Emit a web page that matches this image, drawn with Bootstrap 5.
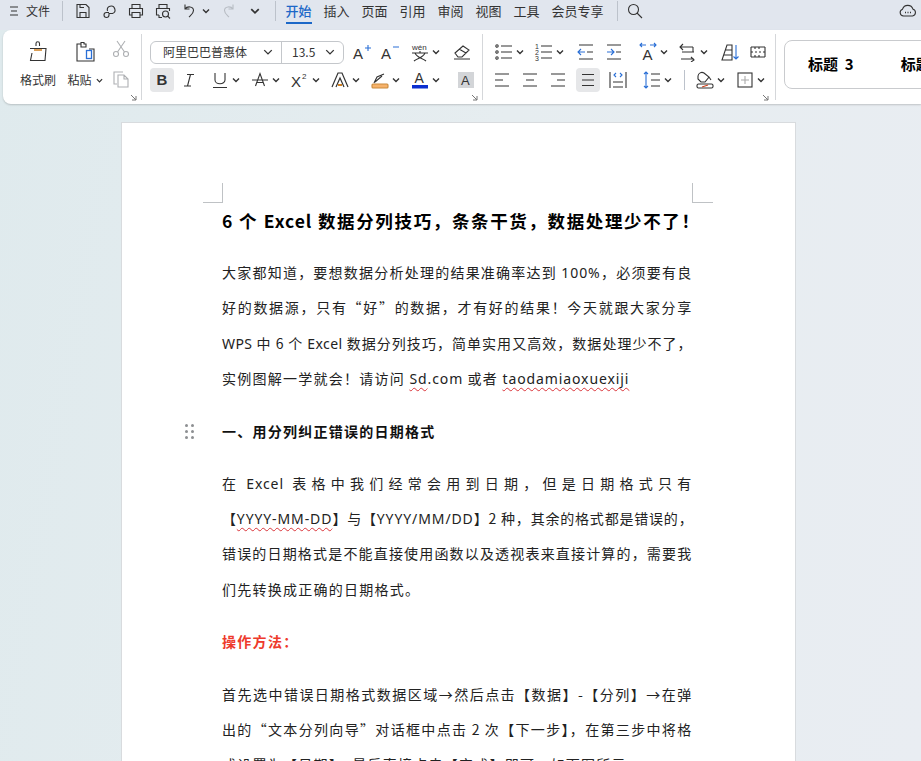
<!DOCTYPE html>
<html lang="zh-CN">
<head>
    <meta charset="UTF-8">
    <meta name="viewport" content="width=device-width, initial-scale=1.0">
    <link href="https://cdn.jsdelivr.net/npm/bootstrap@5.3.3/dist/css/bootstrap.min.css" rel="stylesheet">
    <script src="https://cdn.jsdelivr.net/npm/bootstrap@5.3.3/dist/js/bootstrap.bundle.min.js"></script>
    <title>文档</title>
    <style>
        html,body{height:761px;overflow:hidden;}
        body{
            font-family:"Noto Sans CJK SC","Noto Sans",sans-serif;
            background:linear-gradient(100deg,#dfeaed 0%,#e6edf0 50%,#e9edf2 100%);
            color:#333;
        }
        svg{display:block;flex:none;fill:none;stroke:#333;stroke-width:1.1;}
        svg text{stroke:none;fill:#333;font-family:"Liberation Sans",sans-serif;}
        .blue{stroke:#2a6fd6;}
        .gray{stroke:#aeb0b3;}
        .pale{stroke:#b7bcc3;}

        .topbar{height:30px;padding-bottom:9px;background:#e1e6ee;font-size:12px;}
        .topbar .tb-ic{width:26.5px;display:flex;justify-content:center;flex:none;}
        .sep{width:1px;height:20px;background:#bcc2cb;flex:none;}
        .file-label{width:25px;margin-left:6px;white-space:nowrap;}
        .sep-file{margin:0 7px 0 11px;}
        .undo{margin-left:3.5px;}
        .redo{margin-left:10px;}
        .more{margin-left:12px;}
        .sep-tabs{margin:0 10px 0 15px;}
        .sep-search{margin:0 8px 0 13px;}
        .tabs{align-self:flex-start;}
        .tab{width:26px;margin-right:12px;height:24px;line-height:21px;text-align:center;white-space:nowrap;font-size:13px;}
        .tab.wide{width:52px;margin-right:0;}
        .tab.on{color:#1c68c8;font-weight:500;}
        .tab.on::after{content:"";display:block;height:2px;background:#1c68c8;margin-top:1px;}

        .ribbon{height:74px;margin-left:3px;background:#fff;border-radius:8px 0 0 8px;box-shadow:0 1px 2px rgba(0,0,0,.18);overflow:hidden;}
        .grp{height:74px;flex:none;display:flex;flex-direction:column;}
        .grp-clip{width:138px;}
        .grp-font{width:340px;padding-left:8px;}
        .grp-para{width:292px;padding-left:5px;}
        .grp-line{width:1px;height:66px;background:#d5d7da;margin-top:4px;flex:none;}
        .rw{height:28px;display:flex;align-items:center;flex:none;}
        .rw.first{margin-top:8px;}
        .launch{height:8px;display:flex;justify-content:flex-end;flex:none;padding-right:4px;}
        .launch.clip{margin-bottom:2px;}
        .launch.para-l{padding-right:6px;}
        .c28{width:28px;display:flex;justify-content:center;flex:none;}
        .c40{width:40px;padding-left:6px;display:flex;align-items:center;flex:none;}
        .c40 .cr{margin-left:2px;}
        .c30{width:30px;display:flex;justify-content:center;flex:none;}
        .act{width:24px;height:24px;background:#e6e7e9;border-radius:4px;display:flex;align-items:center;justify-content:center;flex:none;}
        .glyph{font-family:"Liberation Sans",sans-serif;font-size:15px;line-height:20px;width:20px;text-align:center;color:#333;}
        .font-select{height:23px;width:194px;border:1px solid #c4c7cb;border-radius:6px;display:flex;font-size:12px;align-items:center;flex:none;}
        .font-name{width:131px;padding-left:12px;display:flex;align-items:center;justify-content:space-between;padding-right:8px;border-right:1px solid #c4c7cb;height:21px;}
        .font-size{flex:1;padding-left:10px;padding-right:8px;display:flex;align-items:center;justify-content:space-between;}
        .big-tool{font-size:12px;line-height:16px;text-align:center;flex:none;}
        .big-brush{width:60px;padding-left:10px;}
        .big-paste{width:44px;}
        .big-icon{margin-top:11px;height:24px;display:flex;justify-content:center;}
        .big-label{margin-top:7px;white-space:nowrap;display:flex;align-items:center;justify-content:center;}
        .small-stack{width:28px;padding-top:9px;padding-left:4px;}
        .small-stack svg+svg{margin-top:10px;}
        .style-box{width:300px;height:49px;margin-left:8px;margin-top:10px;border:1px solid #c9cbce;border-radius:8px;font-size:15px;font-weight:700;color:#000;flex:none;display:flex;align-items:center;}
        .style-box span{white-space:pre;}
        .style-box .first-style{margin-left:23px;}
        .style-box .next-style{margin-left:47px;}

        .doc{width:675px;margin:18px 0 0 121px;background:#fff;border:1px solid #d8dbde;border-bottom:0;height:700px;padding:60px 103px 0 100px;color:#222;}
        .corners{height:20px;margin-left:-19px;margin-right:-21px;display:flex;justify-content:space-between;}
        .corners i{display:block;width:20px;height:20px;border-bottom:1px solid #bfc2c5;}
        .corners .cl{border-right:1px solid #bfc2c5;}
        .corners .cr2{border-left:1px solid #bfc2c5;width:21px;}
        .doc-title{font-size:17.5px;font-weight:700;line-height:36px;color:#000;letter-spacing:1px;text-align-last:justify;margin:0 -8px 16px 0;white-space:nowrap;}
        .para{margin-bottom:17.2px;font-size:14px;line-height:35.3px;letter-spacing:1.25px;}
        .para div{white-space:nowrap;}
        .para .j{text-align-last:justify;letter-spacing:.8px;}
        .para .lat{font-family:"Noto Sans","Noto Sans CJK SC",sans-serif;letter-spacing:.9px;}
        .para .wps{letter-spacing:.4px;}
        .para .gap-l{margin-left:5px;}
        .sub{font-weight:700;color:#111;position:relative;top:.5px;}
        .red{font-weight:700;color:#ee3a2c;letter-spacing:1.3px;}
        .wavy{text-decoration:underline wavy #d9343a 1px;text-underline-offset:3px;}
        .drag{position:absolute;left:-37px;top:10px;width:9px;height:15px;}
        .drag svg{stroke:none;fill:#8d8f92;}
    </style>
</head>
<body>
    <svg width="0" height="0" class="position-absolute">
        <symbol id="caret" viewBox="0 0 8 8"><path d="M1 2.5 4 5.5 7 2.5" fill="none" stroke="#333" stroke-width="1.4"/></symbol>
        <symbol id="launch" viewBox="0 0 7 7"><path d="M1 1 6 6M6 2V6H2" fill="none" stroke="#777" stroke-width="1"/></symbol>
    </svg>

    <!-- top menu -->
    <div class="topbar d-flex align-items-center">
        <svg class="ms-2" width="12" height="12" viewBox="0 0 12 12"><path d="M2 2H10M3 6H9M2 10H10"/></svg>
        <span class="file-label">文件</span>
        <span class="sep sep-file"></span>
        <div class="tb-ic"><svg width="18" height="18" viewBox="0 0 18 18"><path d="M3 2.500H12L15 5.500V15.500H3ZM6 15.500V10.500H12V15.500M6 2.500V5.500H10"/></svg></div>
        <div class="tb-ic"><svg width="18" height="18" viewBox="0 0 18 18"><path d="M6.500 9A3.800 3.800 0 1 1 11.500 11.500H8V13A2.500 2.500 0 1 1 5.500 10.500H8"/></svg></div>
        <div class="tb-ic"><svg width="18" height="18" viewBox="0 0 18 18"><path d="M5 6V2.500H13V6M5 13H2.500V6.500H15.500V13H13M5 10.500H13V15.500H5Z"/></svg></div>
        <div class="tb-ic"><svg width="18" height="18" viewBox="0 0 18 18"><path d="M5 6V2.500H13V6M5 13H2.500V6.500H15.500V9M8 15.500H5V13"/><circle cx="11.500" cy="12" r="3"/><path d="M13.700 14.200 16 16.500"/></svg></div>
        <div class="d-flex align-items-center undo"><svg width="18" height="18" viewBox="0 0 18 18"><path d="M5 2.500V7H9.500M5 7C7 4 13.500 4 13.500 8.500 13.500 11.500 11 13 9 15"/></svg><svg class="ms-1" width="8" height="8"><use href="#caret"/></svg></div>
        <div class="redo"><svg class="pale" width="18" height="18" viewBox="0 0 18 18"><path d="M13 2.500V7H8.500M13 7C11 4 4.500 4 4.500 8.500 4.500 11.500 7 13 9 15"/></svg></div>
        <div class="more"><svg width="10" height="10"><use href="#caret"/></svg></div>
        <span class="sep sep-tabs"></span>
        <div class="d-flex tabs">
            <div class="tab on">开始</div><div class="tab">插入</div><div class="tab">页面</div><div class="tab">引用</div><div class="tab">审阅</div><div class="tab">视图</div><div class="tab">工具</div><div class="tab wide">会员专享</div>
        </div>
        <span class="sep sep-search"></span>
        <svg width="18" height="18" viewBox="0 0 18 18"><circle cx="7.500" cy="7.500" r="5"/><path d="M11 11 16 16"/></svg>
        <svg class="ms-auto me-1" width="18" height="16" viewBox="0 0 18 16"><path d="M4.500 13A3.500 3.500 0 0 1 3.500 6.200 5.500 5.500 0 0 1 14 6.200 3.500 3.500 0 0 1 13.500 13Z"/><path d="M6 9.500H7M8.500 9.500H9.500M11 9.500H12" stroke-width="1.400"/></svg>
    </div>

    <!-- ribbon -->
    <div class="ribbon d-flex">
        <div class="grp grp-clip">
            <div class="d-flex flex-grow-1">
                <div class="big-tool big-brush">
                    <div class="big-icon"><svg width="22" height="22" viewBox="0 0 22 22"><path d="M9 5V2.500A1.500 1.500 0 0 1 12.500 2.500V5M3 7.500H19L18 19.500H3.500L5 12"/><path d="M7 9H15" stroke="#d08020" stroke-width="1.300"/></svg></div>
                    <div class="big-label">格式刷</div>
                </div>
                <div class="big-tool big-paste">
                    <div class="big-icon"><svg width="22" height="22" viewBox="0 0 22 22"><path d="M7 3H3V20H20V8H15M7 3V1.500H10V3H12V6H7Z"/><rect class="blue" x="12.500" y="9.500" width="5" height="8" stroke-width="1.300"/></svg></div>
                    <div class="big-label">粘贴<svg class="ms-1" width="7" height="7"><use href="#caret"/></svg></div>
                </div>
                <div class="small-stack">
                    <svg class="gray" width="20" height="20" viewBox="0 0 20 20"><circle cx="5" cy="15" r="2.500"/><circle cx="15" cy="15" r="2.500"/><path d="M6.500 13 14 2M13.500 13 6 2"/></svg>
                    <svg class="gray" width="20" height="20" viewBox="0 0 20 20"><path d="M12 3H3V15H6M7 6H13L17 10V18H7ZM13 6V10H17"/></svg>
                </div>
            </div>
            <div class="launch clip"><svg width="7" height="7"><use href="#launch"/></svg></div>
        </div>
        <div class="grp-line"></div>

        <div class="grp grp-font">
            <div class="rw first">
                <div class="font-select">
                    <div class="font-name"><span>阿里巴巴普惠体</span><svg width="10" height="10" viewBox="0 0 8 8"><path d="M1 2.500 4 5.500 7 2.500"/></svg></div>
                    <div class="font-size"><span>13.5</span><svg width="10" height="10" viewBox="0 0 8 8"><path d="M1 2.500 4 5.500 7 2.500"/></svg></div>
                </div>
                <div class="c28 ms-1"><svg width="20" height="20" viewBox="0 0 20 20"><text x="1" y="17" font-size="15">A</text><path class="blue" d="M13 6H19M16 3V9"/></svg></div>
                <div class="c28"><svg width="20" height="20" viewBox="0 0 20 20"><text x="1" y="17" font-size="15">A</text><path class="blue" d="M13 5H19"/></svg></div>
                <div class="c40"><svg width="20" height="20" viewBox="0 0 20 20"><text x="2" y="8" font-size="8">wén</text><path d="M2 11H18M10 9V11M5 11C7 16 13 16 16 19M15 11C13 16 7 16 4 19"/></svg><svg class="cr" width="8" height="8"><use href="#caret"/></svg></div>
                <div class="c28 ms-1"><svg width="20" height="20" viewBox="0 0 20 20"><path d="M3 11 11 4 17 8 10 15H6ZM7 7 14 11M2 17H18"/></svg></div>
            </div>
            <div class="rw">
                <div class="act"><span class="glyph fw-bold">B</span></div>
                <div class="c30"><svg width="18" height="18" viewBox="0 0 18 18"><path d="M7 3.500H14M4 15H11M10.500 3.500 7.500 15"/></svg></div>
                <div class="c40"><svg width="20" height="20" viewBox="0 0 20 20"><path d="M5 3V10C5 15 15 15 15 10V3M3 17.500H17"/></svg><svg class="cr" width="8" height="8"><use href="#caret"/></svg></div>
                <div class="c40"><svg width="20" height="20" viewBox="0 0 20 20"><path d="M2 10H18M5.500 16 10 3.500 14.500 16M7 12.500H13"/></svg><svg class="cr" width="8" height="8"><use href="#caret"/></svg></div>
                <div class="c40"><svg width="20" height="20" viewBox="0 0 20 20"><text x="1" y="17" font-size="15">X</text><text x="12" y="9" font-size="8">2</text></svg><svg class="cr" width="8" height="8"><use href="#caret"/></svg></div>
                <div class="c40"><svg width="20" height="20" viewBox="0 0 20 20"><path d="M2 17 8 3H12L18 17M6 17 10 8 14 17" stroke-width="1.200"/><path d="M8 15H12" stroke="#d08020" stroke-width="2"/></svg><svg class="cr" width="8" height="8"><use href="#caret"/></svg></div>
                <div class="c40"><svg width="20" height="20" viewBox="0 0 20 20"><path d="M4 13 7 7 14 4M5 12 12 6"/><rect x="2" y="14" width="16" height="4" rx="1" fill="#f6b26b" stroke="#c98a3c"/></svg><svg class="cr" width="8" height="8"><use href="#caret"/></svg></div>
                <div class="c40"><svg width="20" height="20" viewBox="0 0 20 20"><text x="4.500" y="13" font-size="14">A</text><rect x="2" y="15" width="16" height="3.500" fill="#0b2fd0" stroke="none"/></svg><svg class="cr" width="8" height="8"><use href="#caret"/></svg></div>
                <div class="c28 ms-2"><svg width="16" height="16" viewBox="0 0 16 16"><rect width="16" height="16" fill="#d3d5d8" stroke="none"/><text x="3" y="13" font-size="13">A</text></svg></div>
            </div>
            <div class="launch"><svg width="7" height="7"><use href="#launch"/></svg></div>
        </div>
        <div class="grp-line"></div>

        <div class="grp grp-para">
            <div class="rw first">
                <div class="c40"><svg width="20" height="20" viewBox="0 0 20 20"><path d="M7 4H18M7 10H18M7 16H18"/><circle cx="3" cy="4" r="1.200"/><circle cx="3" cy="10" r="1.200"/><circle cx="3" cy="16" r="1.200"/></svg><svg class="cr" width="8" height="8"><use href="#caret"/></svg></div>
                <div class="c40"><svg width="20" height="20" viewBox="0 0 20 20"><text x="1" y="7" font-size="7">1</text><text x="1" y="13" font-size="7">2</text><text x="1" y="19" font-size="7">3</text><path d="M7 4H18M7 10H18M7 16H18"/></svg><svg class="cr" width="8" height="8"><use href="#caret"/></svg></div>
                <div class="c28 ms-1"><svg width="20" height="20" viewBox="0 0 20 20"><path d="M3 3H17M11 10H17M3 17H17"/><path class="blue" d="M9 10H2M5 7 2 10 5 13"/></svg></div>
                <div class="c28"><svg width="20" height="20" viewBox="0 0 20 20"><path d="M3 3H17M12 10H17M3 17H17"/><path class="blue" d="M3 10H10M7 7 10 10 7 13"/></svg></div>
                <div class="c40 ms-1"><svg width="20" height="20" viewBox="0 0 20 20"><path class="blue" d="M2 3H8M18 3H12M4 1 2 3 4 5M16 1 18 3 16 5"/><text x="4.500" y="18" font-size="15">A</text></svg><svg class="cr" width="8" height="8"><use href="#caret"/></svg></div>
                <div class="c40"><svg width="20" height="20" viewBox="0 0 20 20"><path d="M5 2 2 5 5 8M2 5H15M15 5V10M4 10H16M13 15 16 18 13 20M3 17H16"/></svg><svg class="cr" width="8" height="8"><use href="#caret"/></svg></div>
                <div class="c28 ms-1"><svg width="20" height="20" viewBox="0 0 20 20"><path d="M2 18 7 3H12V18ZM4 13H12M5.500 8H12"/><path class="blue" d="M16 3V17M13.500 14.500 16 17 18.500 14.500"/></svg></div>
                <div class="c28"><svg width="18" height="18" viewBox="0 0 18 18"><path d="M2 4H16M2 14H16M2 4V14M16 4V14M6 4V6M10 4V6M6 12V14M10 12V14M2 9H4M6 9H8M10 9H12M14 9H16"/></svg></div>
            </div>
            <div class="rw">
                <div class="c28"><svg width="20" height="20" viewBox="0 0 20 20"><path d="M3 4H17M3 10H11M3 16H17"/></svg></div>
                <div class="c28"><svg width="20" height="20" viewBox="0 0 20 20"><path d="M3 4H17M6 10H14M3 16H17"/></svg></div>
                <div class="c28"><svg width="20" height="20" viewBox="0 0 20 20"><path d="M3 4H17M9 10H17M3 16H17"/></svg></div>
                <div class="act mx-1"><svg width="18" height="18" viewBox="0 0 18 18"><path d="M3 3.500H15M3 9H15M3 14.500H15"/></svg></div>
                <div class="c28"><svg width="20" height="20" viewBox="0 0 20 20"><path d="M2 2V18M18 2V18M5 12H15M5 17H15"/><path class="blue" d="M8 3 6 5 8 7M12 3 14 5 12 7"/></svg></div>
                <div class="c40 ms-1"><svg width="20" height="20" viewBox="0 0 20 20"><path d="M9 4H18M9 10H18M9 16H18"/><path class="blue" d="M4 2V18M2 4 4 2 6 4M2 16 4 18 6 16"/></svg><svg class="cr" width="8" height="8"><use href="#caret"/></svg></div>
                <span class="sep ms-2"></span>
                <div class="c40 ms-1"><svg width="20" height="20" viewBox="0 0 20 20"><path d="M3 6A4 4 0 0 1 9 3L14 7 10 12H6L3 9ZM14 7 16 10"/><rect x="2" y="14" width="16" height="4" rx="1.500"/><path d="M7 17 13 15" stroke="#d0451f"/></svg><svg class="cr" width="8" height="8"><use href="#caret"/></svg></div>
                <div class="c40"><svg width="20" height="20" viewBox="0 0 20 20"><rect x="3" y="3" width="14" height="14"/><path d="M10 6V14M6 10H14" stroke="#aaa"/></svg><svg class="cr" width="8" height="8"><use href="#caret"/></svg></div>
            </div>
            <div class="launch para-l"><svg width="7" height="7"><use href="#launch"/></svg></div>
        </div>
        <div class="grp-line"></div>

        <div class="style-box"><span class="first-style">标题  3</span><span class="next-style">标题  4</span></div>
    </div>

    <!-- document page -->
    <div class="doc">
        <div class="corners"><i class="cl"></i><i class="cr2"></i></div>
        <div class="doc-title">6 个 Excel 数据分列技巧，条条干货，数据处理少不了！</div>
        <div class="para">
            <div class="j">大家都知道，要想数据分析处理的结果准确率达到 <span class="lat">100%</span>，必须要有良</div>
            <div class="j">好的数据源，只有“好”的数据，才有好的结果！今天就跟大家分享</div>
            <div class="j wps"><span class="lat wps">WPS</span> 中 6 个 <span class="lat wps">Excel</span> 数据分列技巧，简单实用又高效，数据处理少不了，</div>
            <div>实例图解一学就会！请访问 <span class="lat"><span class="wavy">Sd</span>.com</span> 或者 <span class="lat wavy">taodamiaoxuexiji</span></div>
        </div>
        <div class="para sub"><div class="drag"><svg width="9" height="15" viewBox="0 0 9 15"><circle cx="1.500" cy="1.500" r="1.500"/><circle cx="7.500" cy="1.500" r="1.500"/><circle cx="1.500" cy="7.500" r="1.500"/><circle cx="7.500" cy="7.500" r="1.500"/><circle cx="1.500" cy="13.500" r="1.500"/><circle cx="7.500" cy="13.500" r="1.500"/></svg></div><div>一、用分列纠正错误的日期格式</div></div>
        <div class="para">
            <div class="j">在<span class="lat gap-l">Excel</span> 表格中我们经常会用到日期，但是日期格式只有</div>
            <div class="j">【<span class="lat wavy">YYYY-MM-DD</span>】与【<span class="lat">YYYY/MM/DD</span>】2 种，其余的格式都是错误的，</div>
            <div class="j">错误的日期格式是不能直接使用函数以及透视表来直接计算的，需要我</div>
            <div>们先转换成正确的日期格式。</div>
        </div>
        <div class="para red"><div>操作方法：</div></div>
        <div class="para">
            <div class="j">首先选中错误日期格式数据区域→然后点击【数据】-【分列】→在弹</div>
            <div class="j">出的“文本分列向导”对话框中点击 2 次【下一步】，在第三步中将格</div>
            <div>式设置为【日期】，最后直接点击【完成】即可，如下图所示：</div>
        </div>
    </div>
</body>
</html>
